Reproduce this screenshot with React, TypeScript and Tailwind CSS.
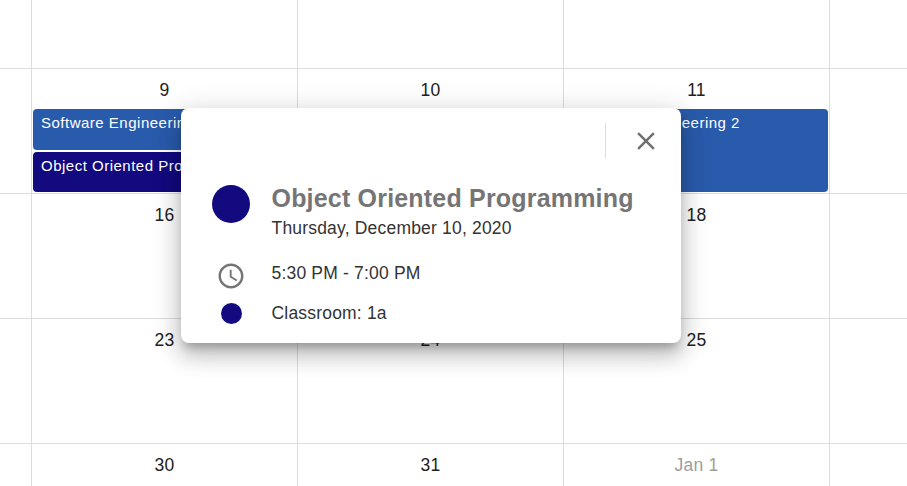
import { MdAccessTime, MdClose } from "react-icons/md";

type CalendarEvent = { title: string; tone: string };
type Day = { label: string; muted?: boolean; events?: CalendarEvent[] };

const blue = "bg-[#295bac]";
const navy = "bg-[#120a7e]";

const weeks: Day[][] = [
  [
    { label: "" },
    {
      label: "9",
      events: [
        { title: "Software Engineering 2", tone: `${blue} h-[41px]` },
        { title: "Object Oriented Programming", tone: `${navy} h-[40px]` },
      ],
    },
    { label: "10" },
    { label: "11", events: [{ title: "Software Engineering 2", tone: `${blue} h-[83px]` }] },
    { label: "" },
  ],
  [{ label: "" }, { label: "16" }, { label: "17" }, { label: "18" }, { label: "" }],
  [{ label: "" }, { label: "23" }, { label: "24" }, { label: "25" }, { label: "" }],
  [{ label: "" }, { label: "30" }, { label: "31" }, { label: "Jan 1", muted: true }, { label: "" }],
];

const columns = "grid grid-cols-[32px_266px_266px_266px_77px]";
const cell = "border-b border-r border-[#dcdcdc] last:border-r-0";

function DayCell({ day }: { day: Day }) {
  return (
    <div className={`${cell} min-w-0`}>
      <div
        className={`h-[40px] pt-[9px] text-center text-[17.5px] leading-[25px] tracking-[0.19px] ${
          day.muted ? "text-[#9e9e9e]" : "text-[#212121]"
        }`}
      >
        {day.label}
      </div>
      <div className="flex flex-col gap-[2px] pl-px pr-px">
        {day.events?.map((event) => (
          <div
            key={event.title}
            className={`${event.tone} overflow-hidden whitespace-nowrap rounded-[4px] px-2 pt-[4px] text-[15px] leading-[20px] tracking-[0.5px] text-white`}
          >
            {event.title}
          </div>
        ))}
      </div>
    </div>
  );
}

function EventPopover() {
  return (
    <section className="absolute left-[181px] top-[108px] h-[235px] w-[500px] rounded-[8px] bg-white text-[17.5px] text-[#333] shadow-[0_8px_10px_-4px_rgba(0,0,0,0.24),0_13px_21px_1px_rgba(0,0,0,0.16),0_5px_28px_5px_rgba(0,0,0,0.12)]">
      <header className="flex h-[66px] items-center justify-end pr-[20px]">
        <div className="mb-[2px] mr-[25px] h-[35px] w-px bg-[#dcdcdc]" />
        <button aria-label="Close" className="text-[#707070]">
          <MdClose size={30} />
        </button>
      </header>
      <div className="flex h-[74px]">
        <div className="flex w-[90.5px] justify-center pl-[9.5px] pt-[10.5px]">
          <div className="h-[38px] w-[38px] rounded-full bg-[#120a7e]" />
        </div>
        <div className="pt-[9px]">
          <h2 className="text-[25px] font-bold leading-[30px] tracking-[0.19px] text-[#757575]">
            Object Oriented Programming
          </h2>
          <p className="leading-[30px] tracking-[0.19px]">Thursday, December 10, 2020</p>
        </div>
      </div>
      <div className="flex h-[45px]">
        <div className="flex w-[90.5px] justify-center pl-[9.5px] pt-[13px] text-[#757575]">
          <MdAccessTime size={30} />
        </div>
        <p className="pt-[13px] leading-[25px] tracking-[0.19px]">5:30 PM - 7:00 PM</p>
      </div>
      <div className="flex h-[40px]">
        <div className="flex w-[90.5px] justify-center pl-[9.5px] pt-[10px]">
          <div className="h-[21px] w-[21px] rounded-full bg-[#120a7e]" />
        </div>
        <p className="pt-[8px] leading-[25px] tracking-[0.19px]">Classroom: 1a</p>
      </div>
    </section>
  );
}

export default function App() {
  return (
    <main className="relative h-[486px] w-[907px] overflow-hidden bg-white font-['Liberation_Sans',Arial,sans-serif]">
      <div className={`${columns} h-[69px]`}>
        {["a", "b", "c", "d", "e"].map((key) => (
          <div key={key} className={cell} />
        ))}
      </div>
      {weeks.map((week, row) => (
        <div key={row} className={`${columns} h-[125px]`}>
          {week.map((day, column) => (
            <DayCell key={column} day={day} />
          ))}
        </div>
      ))}
      <EventPopover />
    </main>
  );
}
